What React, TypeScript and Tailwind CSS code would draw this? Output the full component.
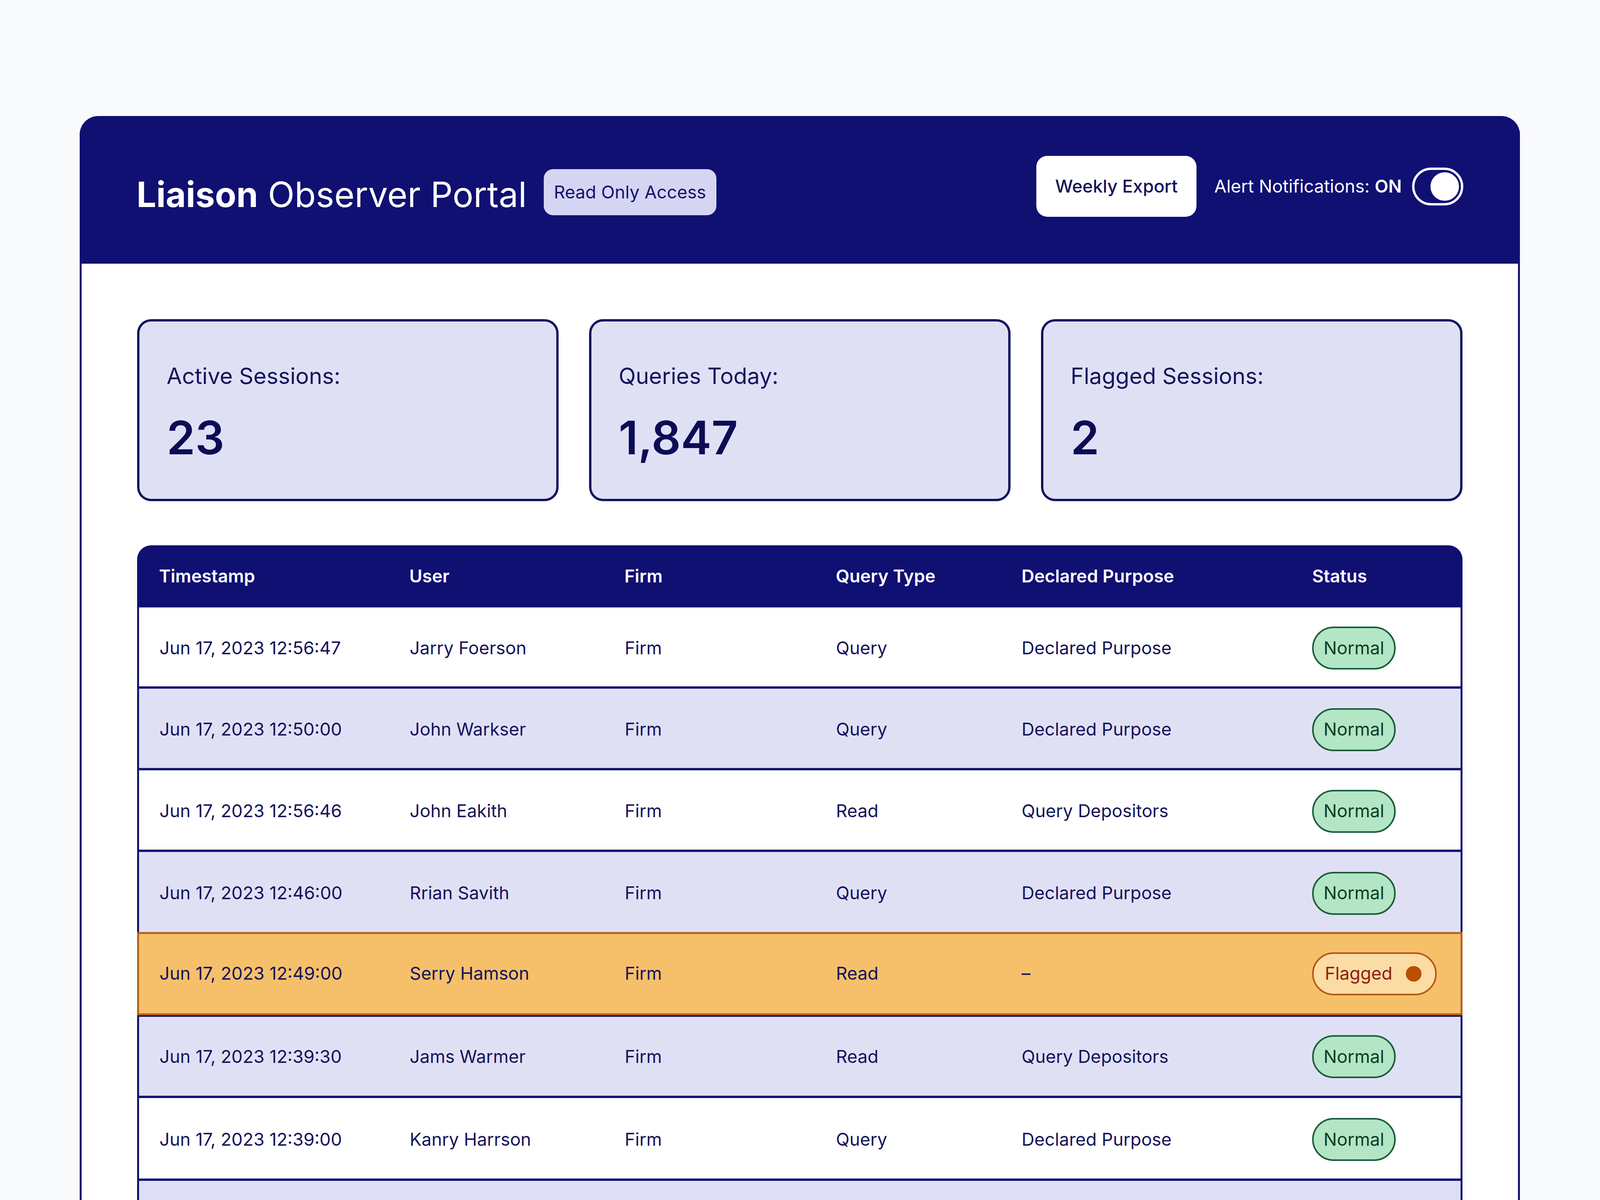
const stats = [
  { label: "Active Sessions:", value: "23" },
  { label: "Queries Today:", value: "1,847" },
  { label: "Flagged Sessions:", value: "2" },
]

const rows = [
  { time: "Jun 17, 2023 12:56:47", user: "Jarry Foerson", type: "Query", purpose: "Declared Purpose", height: "h-[208px]", bg: "bg-white" },
  { time: "Jun 17, 2023 12:50:00", user: "John Warkser", type: "Query", purpose: "Declared Purpose", height: "h-[209px]", bg: "bg-[#e0e0f5]" },
  { time: "Jun 17, 2023 12:56:46", user: "John Eakith", type: "Read", purpose: "Query Depositors", height: "h-[209px]", bg: "bg-white" },
  { time: "Jun 17, 2023 12:46:00", user: "Rrian Savith", type: "Query", purpose: "Declared Purpose", height: "h-[205px]", bg: "bg-[#e0e0f5]", noBorder: true },
  { time: "Jun 17, 2023 12:49:00", user: "Serry Hamson", type: "Read", purpose: "–", height: "h-[213px]", flagged: true },
  { time: "Jun 17, 2023 12:39:30", user: "Jams Warmer", type: "Read", purpose: "Query Depositors", height: "h-[212px]", bg: "bg-[#e0e0f5]" },
  { time: "Jun 17, 2023 12:39:00", user: "Kanry Harrson", type: "Query", purpose: "Declared Purpose", height: "h-[212px]", bg: "bg-white" },
]

// Horizontal sizes follow the window width (vw, %, fr), so nothing runs off the side
const columns =
  "grid grid-cols-[minmax(0,861fr)_minmax(0,740fr)_minmax(0,727fr)_minmax(0,639fr)_minmax(0,1000fr)_minmax(0,511fr)] items-center"

const App = () => {
  return (
    <div className="h-[3072px] w-full overflow-hidden bg-[#f9fafb] pt-[297px] pl-[4.978%] pr-[5.015%] font-['Inter',sans-serif] text-[#14145a]">
      <div className="h-[3000px] w-full rounded-t-[48px] border-x-[5px] border-[#14146e] bg-white">
        {/* Header */}
        <header className="-mx-[5px] flex h-[378px] items-start justify-between rounded-t-[48px] bg-[#101073] pl-[3.96%] pr-[3.94%]">
          <div className="mt-[126px] flex items-center gap-[1.054vw]">
            <h1 className="whitespace-nowrap text-[2.18vw] leading-[150px] text-white">
              <span className="font-bold">Liaison</span> <span className="font-normal">Observer Portal</span>
            </h1>
            <span className="mb-[12px] flex h-[118px] w-[10.79vw] items-center justify-center rounded-[24px] bg-[#d5d5f3] text-[1.108vw] text-[#14146e]">
              Read Only Access
            </span>
          </div>
          <div className="mt-[102px] flex items-center">
            <button className="flex h-[156px] w-[10.01vw] items-center justify-center rounded-[28px] bg-white text-[1.108vw] font-medium text-[#14145a]">
              Weekly Export
            </button>
            <span className="ml-[1.11vw] whitespace-nowrap text-[1.108vw] text-white">
              Alert Notifications: <span className="font-semibold">ON</span>
            </span>
            <span className="ml-[0.66vw] flex h-[97px] w-[3.18vw] items-center justify-end rounded-full border-[6px] border-white px-[5px]">
              <span className="h-[73px] w-[73px] rounded-full bg-white" />
            </span>
          </div>
        </header>

        <main className="pt-[142px] pl-[3.863%] pr-[3.843%]">
          {/* Stat cards */}
          <div className="grid grid-cols-3 gap-x-[2.3%]">
            {stats.map((stat) => (
              <div key={stat.label} className="h-[466px] rounded-[36px] border-[6px] border-[#14145f] bg-[#e0e0f5] pl-[1.7vw] pt-[84px]">
                <div className="text-[1.399vw] leading-[110px] text-[#14145a]">{stat.label}</div>
                <div className="mt-[13px] text-[2.87vw] leading-[180px] font-semibold text-[#0c0c55]">{stat.value}</div>
              </div>
            ))}
          </div>

          {/* Sessions table */}
          <div className="mt-[113px]">
            <div className={`${columns} h-[159px] rounded-t-[36px] bg-[#101073] pl-[1.37vw] pr-[5px] text-[1.108vw] font-semibold text-white`}>
              <span>Timestamp</span>
              <span>User</span>
              <span>Firm</span>
              <span>Query Type</span>
              <span>Declared Purpose</span>
              <span>Status</span>
            </div>
            {rows.map((row) => (
              <div
                key={row.time}
                className={`${columns} ${row.height} pl-[1.28vw] text-[1.108vw] ${
                  row.flagged
                    ? "relative border-x-[5px] border-y-[5px] border-[#b8621c] bg-[#f6c06b] shadow-[0_4px_0_#14145a]"
                    : `border-x-[5px] border-[#14146e] pt-[6px] ${row.noBorder ? "" : "border-b-[6px]"} ${row.bg}`
                }`}
              >
                <span className="whitespace-nowrap">{row.time}</span>
                <span className="whitespace-nowrap">{row.user}</span>
                <span>Firm</span>
                <span>{row.type}</span>
                <span className="whitespace-nowrap">{row.purpose}</span>
                <span>
                  {row.flagged ? (
                    <span className="flex h-[110px] w-[7.776vw] items-center justify-between rounded-full border-[4px] border-[#b8560f] bg-[#fbdca5] pl-[0.69vw] pr-[0.836vw] text-[#8b1f12]">
                      Flagged
                      <span className="h-[40px] w-[40px] rounded-full bg-[#b85000]" />
                    </span>
                  ) : (
                    <span className="flex h-[110px] w-[5.214vw] items-center justify-center rounded-full border-[4px] border-[#1a5c3a] bg-[#b3e6c4] text-[#0f3d24]">
                      Normal
                    </span>
                  )}
                </span>
              </div>
            ))}
            {/* The next row is cut off by the bottom of the page */}
            <div className="h-[212px] border-x-[5px] border-[#14146e] bg-[#dedef6]" />
          </div>
        </main>
      </div>
    </div>
  )
}

export default App
